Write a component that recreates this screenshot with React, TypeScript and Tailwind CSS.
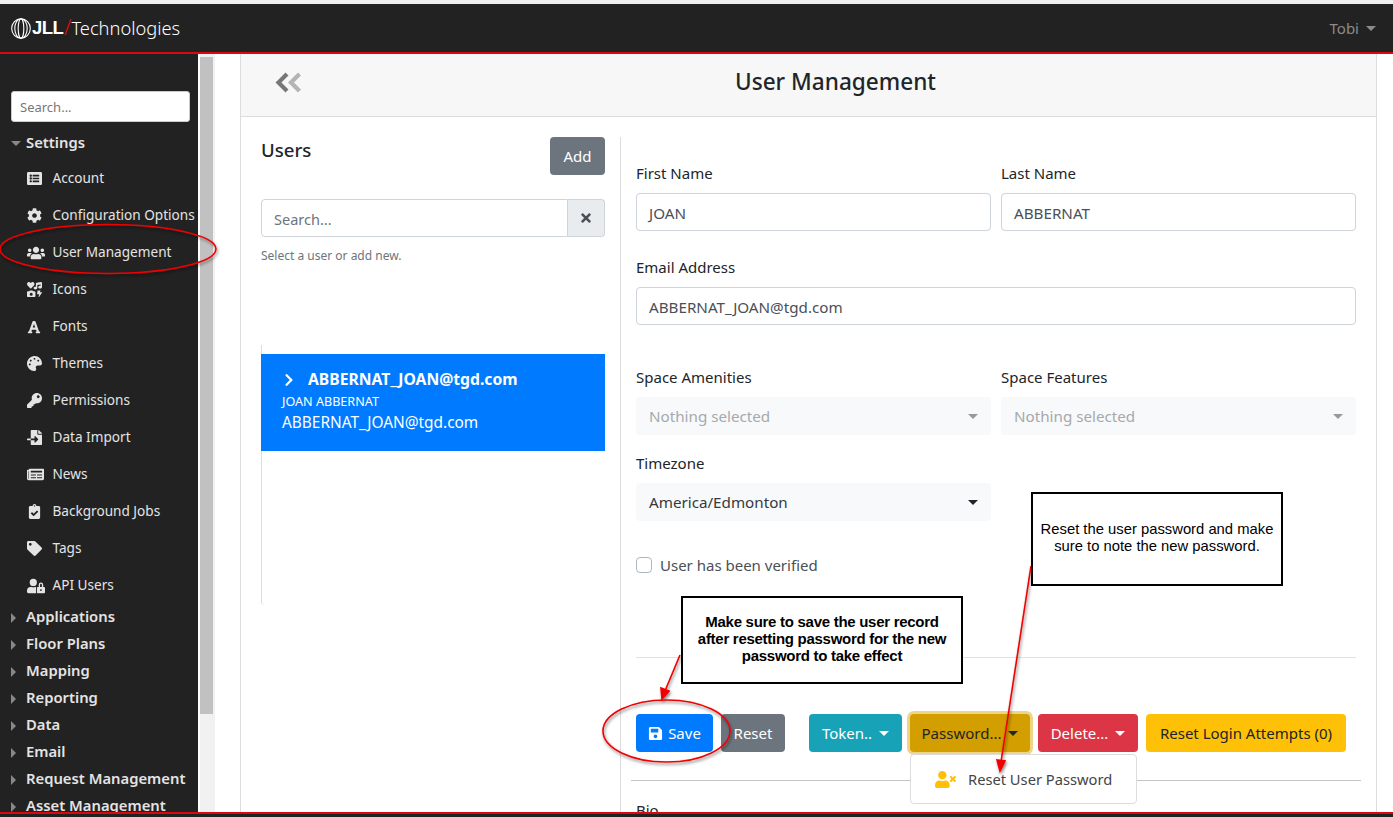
import { FaListAlt, FaCog, FaUsers, FaIcons, FaFont, FaPalette, FaKey, FaFileImport, FaNewspaper, FaClipboardCheck, FaTag, FaUserLock, FaSave, FaUserTimes, FaChevronRight, FaTimes } from "react-icons/fa"

const settingsItems = [
  { label: "Account", icon: FaListAlt, size: 15 },
  { label: "Configuration Options", icon: FaCog, size: 15 },
  { label: "User Management", icon: FaUsers, size: 18 },
  { label: "Icons", icon: FaIcons, size: 15 },
  { label: "Fonts", icon: FaFont, size: 14 },
  { label: "Themes", icon: FaPalette, size: 15 },
  { label: "Permissions", icon: FaKey, size: 15 },
  { label: "Data Import", icon: FaFileImport, size: 15 },
  { label: "News", icon: FaNewspaper, size: 17 },
  { label: "Background Jobs", icon: FaClipboardCheck, size: 15 },
  { label: "Tags", icon: FaTag, size: 15 },
  { label: "API Users", icon: FaUserLock, size: 18 },
]

const groups = ["Applications", "Floor Plans", "Mapping", "Reporting", "Data", "Email", "Request Management", "Asset Management"]

function Caret({ className }: { className: string }) {
  return <span className={"inline-block h-0 w-0 border-x-[5px] border-t-[5px] border-x-transparent " + className} />
}

function Logo() {
  return (
    <div className="flex items-center text-white">
      <svg width="20" height="21" viewBox="0 0 20 21" fill="none" stroke="#fff" strokeWidth="1.1">
        <ellipse cx="10" cy="10.5" rx="9.3" ry="9.8" />
        <ellipse cx="10" cy="10.5" rx="6.2" ry="9.8" />
        <ellipse cx="10" cy="10.5" rx="2.8" ry="9.8" />
      </svg>
      <span className="ml-[1px] font-['Liberation_Sans',sans-serif] text-[18.5px] font-bold tracking-[-0.6px]">JLL</span>
      <span className="ml-[1px] text-[21px] font-light text-[#e30613]">/</span>
      <span className="text-[18.3px] font-light">Technologies</span>
    </div>
  )
}

function Sidebar() {
  return (
    <aside className="flex h-full w-[198px] shrink-0 flex-col overflow-hidden bg-[#222222] pl-[11px] pt-[37px] text-[#e4e4e4]">
      <input placeholder="Search..." className="h-[31px] w-[179px] shrink-0 rounded-[3px] border border-[#ccc] bg-white px-2 text-[13px] text-[#555] placeholder:text-[#777]" />
      <div className="mt-[8px] flex h-[27px] shrink-0 items-center">
        <Caret className="border-t-[#888]" />
        <span className="relative -top-px ml-[5px] text-[14.8px] font-semibold">Settings</span>
      </div>
      <ul className="mt-[3px] shrink-0">
        {settingsItems.map(({ label, icon: Icon, size }) => (
          <li key={label} className="flex h-[37px] items-center pl-[16px]">
            <span className="flex w-[25.5px] shrink-0">
              <Icon size={size} />
            </span>
            <span className="whitespace-nowrap text-[13.6px]">{label}</span>
          </li>
        ))}
      </ul>
      <ul className="shrink-0">
        {groups.map((g) => (
          <li key={g} className="flex h-[27px] items-center">
            <span className="inline-block h-0 w-0 border-y-[5px] border-l-[5px] border-y-transparent border-l-[#888]" />
            <span className="relative -top-px ml-[10px] whitespace-nowrap text-[14.8px] font-semibold">{g}</span>
          </li>
        ))}
      </ul>
    </aside>
  )
}

function Field({ label, value, className }: { label: string; value: string; className?: string }) {
  return (
    <div className={className}>
      <div className="mb-[9px] text-[15px] leading-[22px] text-[#212529]">{label}</div>
      <div className="flex h-[38px] items-center rounded border border-[#ced4da] px-3 pt-[2px] text-[15.2px] text-[#495057]">{value}</div>
    </div>
  )
}

function Select({ label, value, muted }: { label: string; value: string; muted?: boolean }) {
  return (
    <div>
      <div className="mb-[9px] text-[15px] leading-[22px] text-[#212529]">{label}</div>
      <div className="flex h-[38px] items-center justify-between rounded bg-[#f8f9fa] pl-[13px] pr-[13px] pt-[1px] text-[15.2px]">
        <span className={muted ? "text-[#a5a9ad]" : "text-[#343a40]"}>{value}</span>
        <Caret className={muted ? "border-t-[#999]" : "border-t-[#212529]"} />
      </div>
    </div>
  )
}

function Btn({ className, children }: { className: string; children: React.ReactNode }) {
  return <div className={"flex h-[38px] shrink-0 items-center justify-center rounded text-[15px] " + className}>{children}</div>
}

function Annotations() {
  return (
    <>
      <svg className="pointer-events-none absolute left-0 top-0" width="1393" height="817" fill="none">
        <defs>
          <filter id="sh" x="-10%" y="-20%" width="120%" height="150%">
            <feDropShadow dx="1" dy="2" stdDeviation="1.5" floodColor="#000" floodOpacity="0.5" />
          </filter>
        </defs>
        <g filter="url(#sh)" stroke="#f00000" strokeWidth="1.6">
          <ellipse cx="108" cy="249" rx="108" ry="24.5" />
          <ellipse cx="666.5" cy="731" rx="63.5" ry="31" />
          <line x1="680" y1="655" x2="665" y2="691" />
          <path d="M662 699 L661 688 L669 691 Z" fill="#f00000" />
          <line x1="1031" y1="566" x2="1001" y2="762" />
          <path d="M1000 771 L997 760 L1005 761 Z" fill="#f00000" />
        </g>
      </svg>
      <div className="absolute left-[681px] top-[596px] h-[88px] w-[282px] border-2 border-black bg-white pt-[15px] text-center font-['Liberation_Sans',sans-serif] text-[15px] font-bold leading-[17px] tracking-[-0.28px] text-black">
        Make sure to save the user record
        <br />
        after resetting password for the new
        <br />
        password to take effect
      </div>
      <div className="absolute left-[1031px] top-[492px] h-[94px] w-[252px] border-2 border-black bg-white pt-[27px] text-center font-['Liberation_Sans',sans-serif] text-[14.8px] leading-[17px] text-black">
        Reset the user password and make
        <br />
        sure to note the new password.
      </div>
    </>
  )
}

export default function App() {
  return (
    <div className="relative flex h-[817px] w-[1393px] flex-col overflow-hidden bg-white font-['Noto_Sans',sans-serif]">
      <div className="h-[4px] shrink-0 bg-[#f0f0f0]" />
      <header className="flex h-[50px] shrink-0 items-center justify-between border-b-2 border-[#d8090f] bg-[#222222] pl-[11px] pr-[17px]">
        <Logo />
        <div className="flex items-center gap-[7px] text-[15px] text-[#8b8b8b]">
          Tobi
          <Caret className="border-t-[#8b8b8b]" />
        </div>
      </header>

      <div className="flex min-h-0 flex-1">
        <Sidebar />
        <div className="flex w-[17px] shrink-0 border-l-2 border-white bg-[#f1f1f1] pt-[3px]">
          <div className="h-[657px] w-[13px] bg-[#c1c1c1]" />
        </div>

        <main className="ml-[25px] flex h-full w-[1137px] flex-col overflow-hidden border-x border-[#dcdcdc]">
          <div className="flex h-[63px] shrink-0 items-center border-b border-[#dcdcdc] bg-[#f7f7f7] pb-[6px]">
            <svg className="ml-[34px]" width="27" height="21" viewBox="0 0 27 21" fill="none" strokeWidth="4.2">
              <path d="M12 2 L3.5 10.5 L12 19" stroke="#777777" />
              <path d="M24.5 2 L16 10.5 L24.5 19" stroke="#b4b4b4" />
            </svg>
            <h1 className="ml-[433px] text-[22.6px] font-medium text-[#212529]">User Management</h1>
          </div>

          <div className="flex min-h-0 flex-1 pt-[20px]">
            <section className="ml-[20px] w-[344px] shrink-0">
              <div className="flex items-start justify-between">
                <h2 className="text-[18.6px] font-medium leading-[26px] text-[#212529]">Users</h2>
                <Btn className="w-[55px] bg-[#6c757d] pt-[1px] text-white">Add</Btn>
              </div>
              <div className="mt-[24px] flex h-[38px]">
                <div className="flex flex-1 items-center rounded-l border border-[#ced4da] px-3 pt-[3px] text-[14.5px] text-[#6c757d]">Search...</div>
                <div className="flex w-[37px] items-center justify-center rounded-r border border-l-0 border-[#ced4da] bg-[#e9ecef]">
                  <FaTimes className="text-[14px] text-[#495057]" />
                </div>
              </div>
              <p className="mt-[10px] text-[12px] leading-[18px] text-[#6c757d]">Select a user or add new.</p>
              <div className="mt-[80px] h-[260px] rounded-bl border-l border-[#dcdcdc] pt-[9px]">
                <div className="-ml-px flex h-[97px] flex-col bg-[#007bff] pl-[21px] pt-[15px] text-white">
                  <div className="flex items-center text-[15.7px] font-bold leading-[21px]">
                    <FaChevronRight className="mr-[12px] text-[14px]" />
                    ABBERNAT_JOAN@tgd.com
                  </div>
                  <div className="mt-[3px] text-[12.6px] leading-[17px]">JOAN ABBERNAT</div>
                  <div className="mt-[2px] text-[15.4px] leading-[22px]">ABBERNAT_JOAN@tgd.com</div>
                </div>
              </div>
            </section>

            <section className="ml-[15px] min-w-0 flex-1 border-l border-[#dcdcdc]">
              <div className="w-[735px] pl-[15px] pt-[25px]">
                <div className="grid grid-cols-2 gap-x-[10px]">
                  <Field label="First Name" value="JOAN" />
                  <Field label="Last Name" value="ABBERNAT" />
                </div>
                <Field label="Email Address" value="ABBERNAT_JOAN@tgd.com" className="mt-[25px]" />
                <div className="mt-[41px] grid grid-cols-2 gap-x-[10px]">
                  <Select label="Space Amenities" value="Nothing selected" muted />
                  <Select label="Space Features" value="Nothing selected" muted />
                </div>
                <div className="mt-[17px] grid grid-cols-2 gap-x-[10px]">
                  <Select label="Timezone" value="America/Edmonton" />
                </div>
                <label className="mt-[34px] flex items-center text-[15px] leading-[20px] text-[#495057]">
                  <span className="mr-[8px] h-[16px] w-[16px] rounded-[4px] border border-[#adb5bd] bg-white" />
                  User has been verified
                </label>
                <hr className="mt-[82px] border-[#dee2e6]" />
              </div>

              <div className="ml-[15px] mt-[56px] flex">
                <Btn className="w-[77px] gap-[5px] bg-[#007bff] text-white">
                  <FaSave className="text-[15px]" />
                  Save
                </Btn>
                <Btn className="ml-[8px] w-[64px] bg-[#6c757d] text-white">Reset</Btn>
                <Btn className="ml-[24px] w-[93px] gap-[7px] bg-[#17a2b8] text-white">
                  Token..
                  <Caret className="border-t-white" />
                </Btn>
                <Btn className="ml-[8px] w-[120px] gap-[7px] bg-[#d39e00] text-[#212529] shadow-[0_0_0_3px_rgba(222,170,12,0.5)]">
                  Password...
                  <Caret className="border-t-[#212529]" />
                </Btn>
                <Btn className="ml-[8px] w-[100px] gap-[7px] bg-[#dc3545] text-white">
                  Delete...
                  <Caret className="border-t-white" />
                </Btn>
                <Btn className="ml-[8px] w-[200px] bg-[#ffc107] text-[#212529]">Reset Login Attempts (0)</Btn>
              </div>

              <hr className="ml-[10px] mt-[28px] w-[730px] border-[#c4c4c4]" />
              <div className="ml-[15px] mt-[17px] text-[15px] leading-[24px] text-[#212529]">Bio</div>
            </section>
          </div>
        </main>
      </div>

      <div className="h-[5px] shrink-0 border-t-2 border-[#d8090f] bg-[#222222]" />

      {/* dropdown menu sits over the divider */}
      <div className="absolute left-[910px] top-[754px] flex h-[50px] w-[227px] items-center rounded border border-[#dcdcdc] bg-white pl-[24px] text-[14.7px] text-[#444]">
        <FaUserTimes className="mr-[12px] text-[21px] text-[#ffc107]" />
        Reset User Password
      </div>

      <Annotations />
    </div>
  )
}
